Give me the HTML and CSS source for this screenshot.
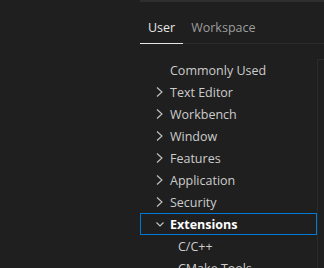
FILE: index.html
```html
<!DOCTYPE html>
<html>
<head>
<meta charset="utf-8">
<link rel="stylesheet" href="styles.css">
</head>
<body>
<div class="panel">
  <div class="topbar"></div>
  <div class="tabs">
    <div class="tab active">User</div>
    <div class="tab">Workspace</div>
  </div>
  <div class="main">
    <div class="toc">
      <div class="row"><span class="chev"></span><span class="label">Commonly Used</span></div>
      <div class="row"><span class="chev"><svg viewBox="0 0 16 16" width="16" height="16"><path d="M4 3.5l5 4.5-5 4.5" fill="none" stroke="#c5c5c5" stroke-width="1.1"/></svg></span><span class="label">Text Editor</span></div>
      <div class="row"><span class="chev"><svg viewBox="0 0 16 16" width="16" height="16"><path d="M4 3.5l5 4.5-5 4.5" fill="none" stroke="#c5c5c5" stroke-width="1.1"/></svg></span><span class="label">Workbench</span></div>
      <div class="row"><span class="chev"><svg viewBox="0 0 16 16" width="16" height="16"><path d="M4 3.5l5 4.5-5 4.5" fill="none" stroke="#c5c5c5" stroke-width="1.1"/></svg></span><span class="label">Window</span></div>
      <div class="row"><span class="chev"><svg viewBox="0 0 16 16" width="16" height="16"><path d="M4 3.5l5 4.5-5 4.5" fill="none" stroke="#c5c5c5" stroke-width="1.1"/></svg></span><span class="label">Features</span></div>
      <div class="row"><span class="chev"><svg viewBox="0 0 16 16" width="16" height="16"><path d="M4 3.5l5 4.5-5 4.5" fill="none" stroke="#c5c5c5" stroke-width="1.1"/></svg></span><span class="label">Application</span></div>
      <div class="row"><span class="chev"><svg viewBox="0 0 16 16" width="16" height="16"><path d="M4 3.5l5 4.5-5 4.5" fill="none" stroke="#c5c5c5" stroke-width="1.1"/></svg></span><span class="label">Security</span></div>
      <div class="row focused"><span class="chev"><svg viewBox="0 0 16 16" width="16" height="16"><path d="M3.5 6.5l3.5 3.5 3.5-3.5" fill="none" stroke="#c5c5c5" stroke-width="1.1"/></svg></span><span class="label bold">Extensions</span></div>
      <div class="row child"><span class="label">C/C++</span></div>
      <div class="row child"><span class="label">CMake Tools</span></div>
    </div>
    <div class="content"></div>
  </div>
</div>
</body>
</html>
```
FILE: styles.css
```css
html, body {
  margin: 0;
  padding: 0;
  background: #1f1f1f;
  height: 100%;
  overflow: hidden;
}
body {
  font-family: "Open Sans", "Noto Sans", sans-serif;
  font-size: 12.5px;
  color: #cccccc;
}
.panel {
  margin-left: 140px;
  display: flex;
  flex-direction: column;
}
.topbar {
  height: 2px;
  flex-shrink: 0;
  background: #2e2e2e;
}
.tabs {
  display: flex;
  flex-shrink: 0;
  height: 41px;
  border-bottom: 1px solid #2b2b2b;
}
.tab {
  padding: 15px 8px 0;
  line-height: 22px;
  font-size: 12.5px;
  color: #9d9d9d;
  box-sizing: border-box;
  height: 42px;
}
.tab.active {
  color: #e7e7e7;
  border-bottom: 1px solid #e7e7e7;
}
.main {
  display: flex;
  margin-top: 15px;
  flex-shrink: 0;
}
.toc {
  width: 177px;
}
.content {
  flex: 1;
  border-left: 1px solid #2b2b2b;
  border-top: 1px solid #2b2b2b;
}
.row {
  height: 22px;
  display: flex;
  align-items: center;
  padding-left: 13px;
  box-sizing: border-box;
}
.chev {
  width: 16px;
  height: 16px;
  display: flex;
  margin-right: 1px;
}
.label {
  white-space: nowrap;
}
.bold {
  font-weight: 700;
  color: #ffffff;
}
.focused {
  border: 1px solid #0078d4;
  padding-left: 12px;
}
.child {
  padding-left: 38px;
}
```
